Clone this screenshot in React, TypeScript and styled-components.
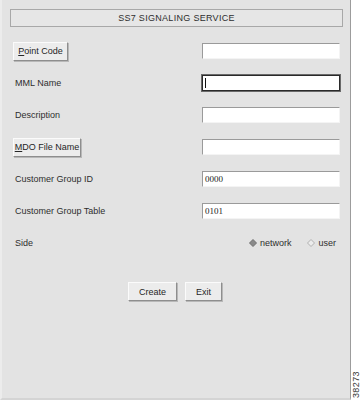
import React from 'react'
import styled, { createGlobalStyle } from 'styled-components'

const GlobalStyle = createGlobalStyle`
  html, body {
    margin: 0;
    padding: 0;
    background: #ffffff;
  }
`

const Page = styled.div`
  display: flex;
  width: 361px;
  height: 400px;
  background: #fff;
`

const Panel = styled.div`
  width: 350px;
  height: 398px;
  background: #e3e3e3;
  border-left: 2px solid #ececec;
  border-right: 1px solid #9c9c9c;
  border-bottom: 2px solid #d4d4d4;
  display: flex;
  flex-direction: column;
  font-family: 'Liberation Sans', Arial, sans-serif;
  font-size: 9px;
  color: #2e2e2e;
`

const TitleBar = styled.div`
  margin: 9px 7px 0 8px;
  height: 16px;
  border: 1px solid #a8a8a8;
  background: #e6e6e6;
  display: flex;
  align-items: center;
  justify-content: center;
  letter-spacing: 0.3px;
`

const Form = styled.div`
  display: grid;
  grid-template-columns: 1fr 138px;
  grid-auto-rows: 32px;
  column-gap: 10px;
  margin: 8px 10px 0 11px;
`

const Label = styled.div`
  display: flex;
  align-items: center;
  padding-left: 2px;
`

const Cell = styled.div<{ $start?: boolean }>`
  display: flex;
  align-items: center;
  justify-content: ${({ $start }) => ($start ? 'flex-start' : 'flex-end')};
`

const Input = styled.div<{ $focused?: boolean }>`
  width: 138px;
  height: 16px;
  box-sizing: border-box;
  background: #fff;
  border-top: 1px solid ${({ $focused }) => ($focused ? '#2a2a2a' : '#9a9a9a')};
  border-left: 1px solid ${({ $focused }) => ($focused ? '#2a2a2a' : '#9a9a9a')};
  border-right: 1px solid ${({ $focused }) => ($focused ? '#2a2a2a' : '#f4f4f4')};
  border-bottom: 1px solid ${({ $focused }) => ($focused ? '#2a2a2a' : '#f4f4f4')};
  box-shadow: ${({ $focused }) => ($focused ? '0 0 0 1px #6a6a6a' : 'none')};
  display: flex;
  align-items: center;
  padding-left: 2px;
  font-family: 'Liberation Serif', 'Times New Roman', serif;
  font-size: 9px;
  color: #222;
`

const Cursor = styled.span`
  width: 1px;
  height: 10px;
  background: #111;
`

const Button = styled.div<{ $w: number }>`
  width: ${({ $w }) => $w}px;
  height: 19px;
  box-sizing: border-box;
  background: #ececec;
  border-top: 1px solid #fbfbfb;
  border-left: 1px solid #fbfbfb;
  border-right: 1px solid #8e8e8e;
  border-bottom: 1px solid #8e8e8e;
  box-shadow: 1px 1px 0 #b8b8b8;
  display: flex;
  align-items: center;
  justify-content: center;
  color: #262626;
`

const Mnemonic = styled.span`
  text-decoration: underline;
`

const RadioGroup = styled.div`
  display: flex;
  align-items: center;
  gap: 16px;
  padding-right: 4px;
`

const Radio = styled.div`
  display: flex;
  align-items: center;
  gap: 3px;
`

const Footer = styled.div`
  display: flex;
  justify-content: center;
  gap: 8px;
  margin-top: 23px;
  padding-right: 2px;
`

const Side = styled.div`
  flex: 1;
  display: flex;
  align-items: flex-end;
  justify-content: center;
  padding-bottom: 2px;
`

const FigureNo = styled.div`
  writing-mode: vertical-rl;
  transform: rotate(180deg);
  font-family: 'Liberation Sans', Arial, sans-serif;
  font-size: 9px;
  color: #333;
  letter-spacing: 0.4px;
`

const Diamond = ({ on }: { on: boolean }) => (
  <svg width="8" height="8" viewBox="0 0 8 8">
    <polygon
      points="4,0.5 7.5,4 4,7.5 0.5,4"
      fill={on ? '#8a8a8a' : '#ececec'}
      stroke={on ? '#6f6f6f' : '#b0b0b0'}
      strokeWidth="1"
    />
  </svg>
)

export default function App() {
  return (
    <Page>
      <GlobalStyle />
      <Panel>
        <TitleBar>SS7 SIGNALING SERVICE</TitleBar>
        <Form>
          <Cell $start>
            <Button $w={55}>
              <span><Mnemonic>P</Mnemonic>oint Code</span>
            </Button>
          </Cell>
          <Cell><Input /></Cell>

          <Label>MML Name</Label>
          <Cell><Input $focused><Cursor /></Input></Cell>

          <Label>Description</Label>
          <Cell><Input /></Cell>

          <Cell $start>
            <Button $w={68}>
              <span><Mnemonic>M</Mnemonic>DO File Name</span>
            </Button>
          </Cell>
          <Cell><Input /></Cell>

          <Label>Customer Group ID</Label>
          <Cell><Input>0000</Input></Cell>

          <Label>Customer Group Table</Label>
          <Cell><Input>0101</Input></Cell>

          <Label>Side</Label>
          <Cell>
            <RadioGroup>
              <Radio><Diamond on />network</Radio>
              <Radio><Diamond on={false} />user</Radio>
            </RadioGroup>
          </Cell>
        </Form>
        <Footer>
          <Button $w={49}>Create</Button>
          <Button $w={37}>Exit</Button>
        </Footer>
      </Panel>
      <Side>
        <FigureNo>38273</FigureNo>
      </Side>
    </Page>
  )
}
